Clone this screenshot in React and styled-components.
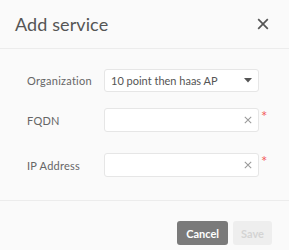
import React from "react";
import styled, { createGlobalStyle } from "styled-components";

const Global = createGlobalStyle`
  html, body { margin: 0; padding: 0; background: #fafafa; }
  body { font-family: "Lato", "Noto Sans", sans-serif; }
`;

const Dialog = styled.div`
  width: 289px;
  height: 250px;
  background: #fafafa;
  display: flex;
  flex-direction: column;
`;

const Header = styled.div`
  height: 48px;
  padding: 0 20px 0 15px;
  display: flex;
  align-items: center;
  justify-content: space-between;
  border-bottom: 1px solid #ececec;
`;

const Title = styled.div`
  font-size: 18px;
  color: #555;
  letter-spacing: 0.1px;
`;

const CloseBtn = styled.div`
  width: 13px;
  height: 13px;
  display: flex;
  align-items: center;
  justify-content: center;
`;

const Body = styled.div`
  height: 152px;
  box-sizing: border-box;
  padding: 20px 0 0 27px;
  border-bottom: 1px solid #ececec;
  display: flex;
  flex-direction: column;
`;

const Row = styled.div`
  display: flex;
  align-items: center;
  margin-top: ${(p) => p.$mt || 0}px;
`;

const Label = styled.div`
  width: 77px;
  font-size: 11px;
  color: #666;
  letter-spacing: 0.25px;
`;

const Field = styled.div`
  width: 155px;
  height: ${(p) => p.$h}px;
  box-sizing: border-box;
  background: #fff;
  border: 1px solid #e6e6e6;
  border-radius: 3px;
  display: flex;
  align-items: center;
  justify-content: space-between;
  padding: 0 6px 0 6px;
  font-size: 11px;
  color: #555;
`;

const Required = styled.span`
  align-self: flex-start;
  color: #f25c5c;
  font-size: 15px;
  line-height: 14px;
  margin-left: 2px;
  margin-top: 1px;
`;

const Footer = styled.div`
  flex: 1;
  display: flex;
  justify-content: flex-end;
  align-items: flex-start;
  padding: 20px 17px 0 0;
  gap: 5px;
`;

const Button = styled.button`
  height: 24px;
  border: none;
  border-radius: 3px;
  padding: 0 ${(p) => p.$px}px;
  font-family: "Lato", "Noto Sans", sans-serif;
  font-weight: 700;
  font-size: 11px;
  background: ${(p) => (p.$primary ? "#7a7a7a" : "#eeeeee")};
  color: ${(p) => (p.$primary ? "#ffffff" : "#d4d4d4")};
  cursor: pointer;
`;

const XIcon = ({ size, color, w }) => (
  <svg width={size} height={size} viewBox="0 0 10 10">
    <path d="M1 1L9 9M9 1L1 9" stroke={color} strokeWidth={w} fill="none" />
  </svg>
);

const Caret = () => (
  <svg width="8" height="5" viewBox="0 0 8 5">
    <path d="M0 0H8L4 4.5Z" fill="#555" />
  </svg>
);

export default function App() {
  return (
    <>
      <Global />
      <Dialog>
        <Header>
          <Title>Add service</Title>
          <CloseBtn>
            <XIcon size={12} color="#555" w={1.4} />
          </CloseBtn>
        </Header>
        <Body>
          <Row>
            <Label>Organization</Label>
            <Field $h={23}>
              <span>10 point then haas AP</span>
              <Caret />
            </Field>
          </Row>
          <Row $mt={16}>
            <Label>FQDN</Label>
            <Field $h={24}>
              <span />
              <XIcon size={8} color="#999" w={1.3} />
            </Field>
            <Required>*</Required>
          </Row>
          <Row $mt={21}>
            <Label>IP Address</Label>
            <Field $h={24}>
              <span />
              <XIcon size={8} color="#999" w={1.3} />
            </Field>
            <Required>*</Required>
          </Row>
        </Body>
        <Footer>
          <Button $primary $px={9}>Cancel</Button>
          <Button $px={8}>Save</Button>
        </Footer>
      </Dialog>
    </>
  );
}
